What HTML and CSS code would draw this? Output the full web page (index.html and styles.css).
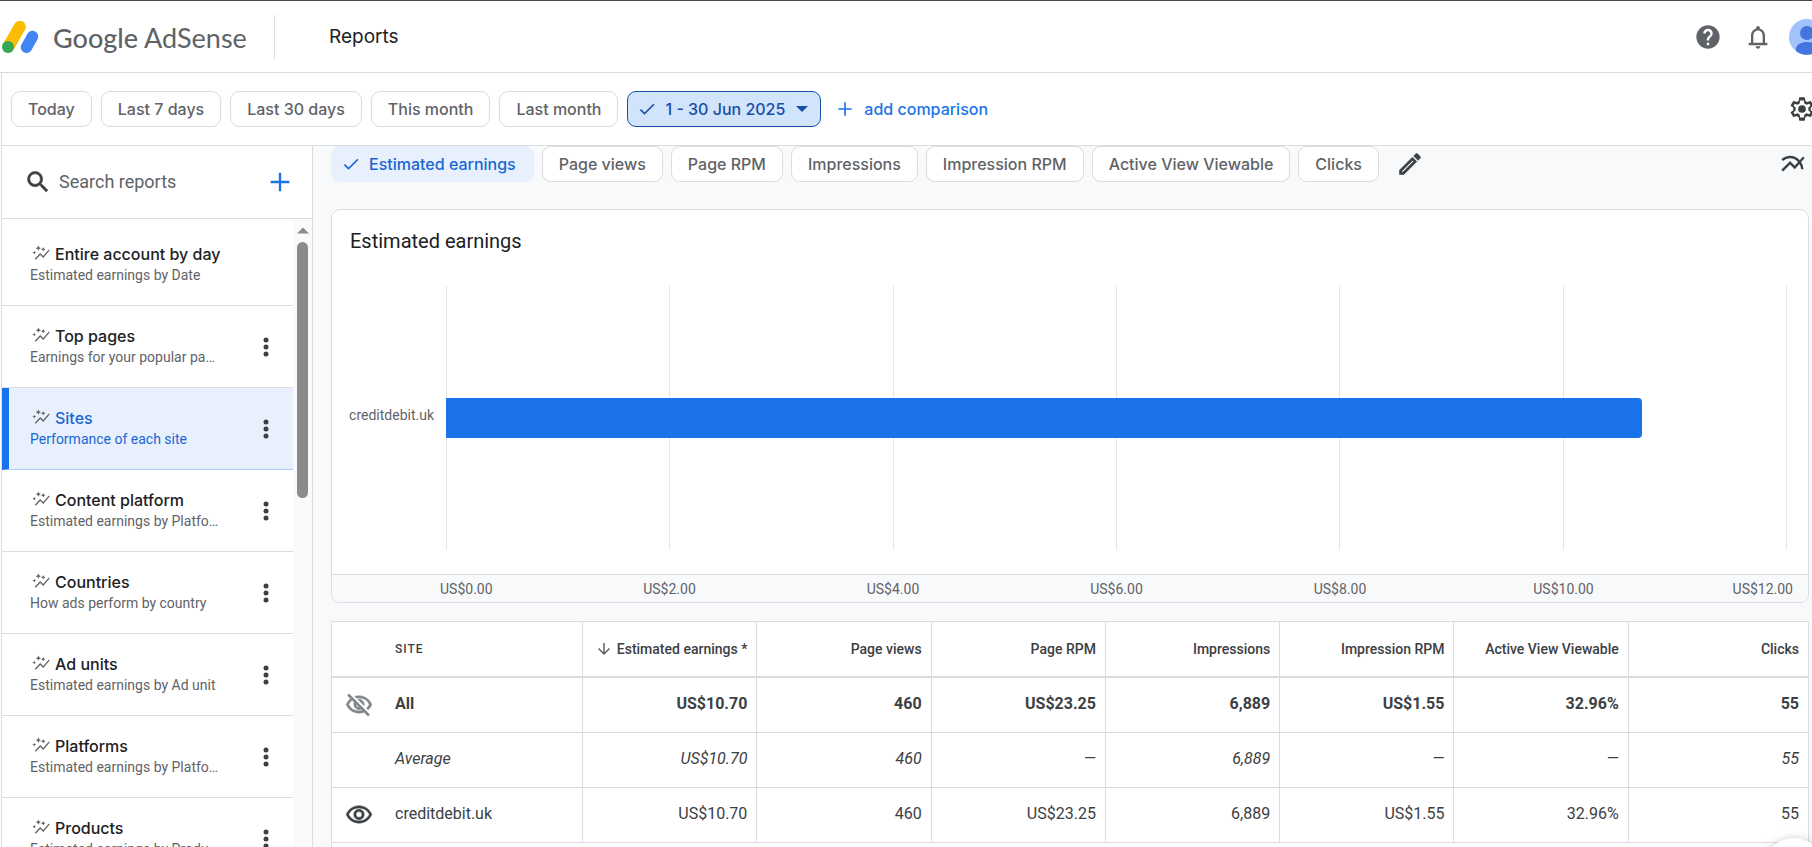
FILE: index.html
```html
<!DOCTYPE html>
<html lang="en">
<head>
    <meta charset="UTF-8">
    <meta name="viewport" content="width=device-width, initial-scale=1.0">
    <title>Reports - Google AdSense</title>
    <link rel="stylesheet" href="styles.css">
</head>
<body>

<!-- Shared icon shapes -->
<svg class="sprite" aria-hidden="true">
    <symbol id="i-check" viewBox="0 0 24 24"><path d="M9 16.17L4.83 12l-1.42 1.41L9 19 21 7l-1.41-1.41z"/></symbol>
    <symbol id="i-plus" viewBox="0 0 24 24"><path d="M20 13h-7v7h-2v-7H4v-2h7V4h2v7h7z"/></symbol>
    <symbol id="i-more" viewBox="0 0 24 24"><circle cx="12" cy="5" r="2.5"/><circle cx="12" cy="12" r="2.5"/><circle cx="12" cy="19" r="2.5"/></symbol>
    <symbol id="i-graph" viewBox="0 0 24 24"><path d="M14.06 7.94L12 7l2.06-.94L15 4l.94 2.06L18 7l-2.06.94L15 10zM3 14l.7-1.800L5.500 11.500l-1.800-.7L3 9l-.7 1.800L.5 11.500l1.800.7zM8.5 9l1.09-2.41L12 5.5 9.59 4.41 8.5 2 7.41 4.41 5 5.5l2.41 1.09zM5 21l6-6.500 4 4L23.500 8.500l-1.100-1.100-7.500 8.600-4-4L3.800 19.800z"/></symbol>
</svg>

<header class="header">
    <a class="brand" href="#">
        <svg class="brand-logo" viewBox="0 0 36 32" fill="none" stroke-linecap="round" aria-hidden="true">
            <path d="M17.800 5.800L6.500 25.500" stroke="#fbbc04" stroke-width="12"/>
            <path d="M30.500 15.500L24.500 26.200" stroke="#4285f4" stroke-width="11.500"/>
            <circle cx="6" cy="26" r="6" fill="#34a853"/>
        </svg>
        <span class="brand-name"><span class="brand-google">Google</span> AdSense</span>
    </a>
    <h1 class="page-title">Reports</h1>
    <div class="header-actions">
        <button class="icon-button muted" aria-label="Help">
            <svg class="icon" viewBox="0 0 24 24"><path d="M12 2C6.480 2 2 6.480 2 12s4.480 10 10 10 10-4.480 10-10S17.520 2 12 2zm1 17h-2v-2h2v2zm2.070-7.750l-.9.920C13.450 12.900 13 13.500 13 15h-2v-.5c0-1.100.45-2.100 1.170-2.830l1.240-1.260c.37-.36.590-.86.590-1.410 0-1.100-.9-2-2-2s-2 .9-2 2H8c0-2.210 1.790-4 4-4s4 1.790 4 4c0 .88-.36 1.680-.93 2.250z"/></svg>
        </button>
        <button class="icon-button muted" aria-label="Notifications">
            <svg class="icon" viewBox="0 0 24 24"><path d="M12 22c1.100 0 2-.9 2-2h-4c0 1.100.9 2 2 2zm6-5v-6c0-3.070-1.630-5.640-4.500-6.320V4c0-.83-.67-1.500-1.500-1.500s-1.500.67-1.500 1.500v.68C7.640 5.360 6 7.920 6 11v6H4v2h16v-2h-2zm-2 0H8v-6c0-2.480 1.510-4.500 4-4.500s4 2.020 4 4.500v6z"/></svg>
        </button>
        <button class="avatar" aria-label="Account">
            <svg viewBox="0 0 36 36"><circle cx="18" cy="18" r="18" fill="#a1c2fa"/><circle cx="18" cy="14" r="7" fill="#4374e0"/><path d="M7 32v-2c0-5 6-7 11-7s11 2 11 7v2a18 18 0 0 1-22 0z" fill="#4374e0"/></svg>
        </button>
    </div>
</header>

<div class="app">
    <div class="date-bar">
        <button class="chip">Today</button>
        <button class="chip">Last 7 days</button>
        <button class="chip">Last 30 days</button>
        <button class="chip">This month</button>
        <button class="chip">Last month</button>
        <button class="chip chip-range">
            <svg class="icon-small"><use href="#i-check"/></svg>
            1 - 30 Jun 2025
            <svg class="caret" viewBox="0 0 12 6"><path d="M0 0h12L6 6z"/></svg>
        </button>
        <button class="add-comparison"><svg class="icon-small"><use href="#i-plus"/></svg>add comparison</button>
        <button class="icon-button settings" aria-label="Settings">
            <svg class="icon" viewBox="0 0 24 24"><path d="M19.430 12.980c.04-.32.07-.64.07-.98s-.03-.66-.07-.98l2.110-1.650c.19-.15.240-.42.120-.64l-2-3.460c-.12-.22-.39-.3-.61-.22l-2.490 1c-.52-.4-1.080-.73-1.690-.98l-.38-2.650C14.460 2.180 14.250 2 14 2h-4c-.25 0-.46.180-.49.420l-.38 2.650c-.61.250-1.170.590-1.690.980l-2.490-1c-.23-.09-.49 0-.61.220l-2 3.460c-.13.220-.07.490.120.640l2.110 1.650c-.04.320-.07.650-.07.980s.03.660.070.980l-2.110 1.650c-.19.150-.24.420-.12.640l2 3.460c.12.220.390.300.610.220l2.490-1c.520.400 1.080.730 1.690.980l.380 2.650c.03.240.240.420.490.420h4c.25 0 .46-.18.490-.42l.380-2.650c.61-.25 1.170-.59 1.690-.98l2.490 1c.23.090.490 0 .61-.22l2-3.460c.12-.22.070-.49-.12-.64zM17.500 12l-.1 1.300 1.900 1.500-1 1.700-2.300-.9-2 1.200-.4 2.400h-3.200l-.4-2.400-2-1.200-2.300.9-1-1.700 1.900-1.500L6.500 12l.1-1.300-1.900-1.500 1-1.700 2.300.9 2-1.200.4-2.400h3.200l.4 2.400 2 1.200 2.300-.9 1 1.700-1.900 1.500z" fill-rule="evenodd"/><circle cx="12" cy="12" r="3.300"/></svg>
        </button>
    </div>

    <div class="content">
        <aside class="sidebar">
            <div class="search">
                <label for="search" aria-label="Search reports">
                    <svg class="icon" viewBox="0 0 24 24"><path d="M15.500 14h-.79l-.28-.27A6.470 6.470 0 0 0 16 9.500 6.500 6.500 0 1 0 9.500 16c1.610 0 3.090-.59 4.230-1.570l.27.280v.79l5 4.990L20.490 19l-4.990-5zm-6 0C7.010 14 5 11.990 5 9.500S7.010 5 9.500 5 14 7.010 14 9.500 11.990 14 9.500 14z" stroke="currentColor" stroke-width=".5"/></svg>
                </label>
                <input type="text" id="search" placeholder="Search reports">
                <button class="icon-button add-report" aria-label="New report"><svg class="icon"><use href="#i-plus"/></svg></button>
            </div>
            <div class="reports">
                <ul class="report-list" id="reportList"></ul>
                <div class="scrollbar" aria-hidden="true">
                    <svg class="scroll-arrow" viewBox="0 0 12 6"><path d="M0 6h12L6 0z"/></svg>
                    <div class="scroll-thumb"></div>
                </div>
            </div>
        </aside>

        <main class="main">
            <div class="metrics">
                <button class="chip chip-selected"><svg class="icon-small"><use href="#i-check"/></svg>Estimated earnings</button>
                <button class="chip">Page views</button>
                <button class="chip">Page RPM</button>
                <button class="chip">Impressions</button>
                <button class="chip">Impression RPM</button>
                <button class="chip">Active View Viewable</button>
                <button class="chip">Clicks</button>
                <button class="icon-button edit" aria-label="Edit metrics">
                    <svg class="icon" viewBox="0 0 24 24"><path d="M14.060 9.020l.92.920L5.920 19H5v-.92l9.060-9.060M17.660 3c-.25 0-.51.100-.7.290l-1.830 1.830 3.750 3.750 1.830-1.830c.39-.39.390-1.020 0-1.410l-2.340-2.340c-.2-.2-.45-.29-.71-.29zm-3.600 3.190L3 17.250V21h3.750L17.810 9.940l-3.750-3.750z" stroke="currentColor" stroke-width=".5"/></svg>
                </button>
                <button class="icon-button chart-type" aria-label="Chart type">
                    <svg class="icon" viewBox="0 0 24 24"><path d="M22 6.920l-1.410-1.410-2.850 3.210C15.680 6.400 12.830 5 9.610 5 6.720 5 4.070 6.160 2 8l1.420 1.420C5.120 7.930 7.270 7 9.610 7c2.740 0 5.090 1.260 6.770 3.240l-2.880 3.240-4-4L2 16.990l1.500 1.500 6-6.010 4 4 4.050-4.550c.75 1.350 1.250 2.900 1.440 4.550H21c-.22-2.300-.95-4.390-2.040-6.140L22 6.920z"/></svg>
                </button>
            </div>

            <section class="card">
                <h2 class="card-title">Estimated earnings</h2>
                <div class="chart">
                    <div class="chart-label">creditdebit.uk</div>
                    <div class="plot">
                        <div class="gridlines"><i></i><i></i><i></i><i></i><i></i><i></i></div>
                        <div class="bar" style="width: 89.17%"></div>
                    </div>
                </div>
                <div class="axis">
                    <span>US$0.00</span>
                    <span>US$2.00</span>
                    <span>US$4.00</span>
                    <span>US$6.00</span>
                    <span>US$8.00</span>
                    <span>US$10.00</span>
                    <span>US$12.00</span>
                </div>
            </section>

            <table class="report-table">
                <colgroup>
                    <col class="col-site"><col class="col-metric"><col class="col-metric"><col class="col-metric"><col class="col-metric"><col class="col-metric"><col class="col-metric"><col>
                </colgroup>
                <thead>
                    <tr>
                        <th class="site-heading">SITE</th>
                        <th><span class="sorted"><svg class="sort-arrow" viewBox="0 0 24 24"><path d="M20 12l-1.410-1.410L13 16.170V4h-2v12.170l-5.580-5.590L4 12l8 8z"/></svg>Estimated earnings *</span></th>
                        <th>Page views</th>
                        <th>Page RPM</th>
                        <th>Impressions</th>
                        <th>Impression RPM</th>
                        <th>Active View Viewable</th>
                        <th>Clicks</th>
                    </tr>
                </thead>
                <tbody>
                    <tr class="row-all">
                        <td>
                            <div class="site">
                                <button class="icon-button hidden-toggle" aria-label="Show in chart">
                                    <svg class="icon" viewBox="0 0 24 24"><path d="M12 6a9.770 9.770 0 0 1 8.820 5.500 9.650 9.650 0 0 1-2.410 3.120l1.410 1.410c1.390-1.230 2.490-2.770 3.180-4.530C21.270 7.110 17 4 12 4c-1.270 0-2.490.2-3.640.57l1.650 1.650C10.660 6.090 11.320 6 12 6zm-1.070 1.140L13 9.210c.57.250 1.030.710 1.280 1.280l2.070 2.070c.08-.34.140-.7.140-1.070C16.500 9.010 14.480 7 12 7c-.37 0-.72.050-1.070.14zM2.010 3.870l2.680 2.680A11.740 11.740 0 0 0 1 11.500C2.730 15.890 7 19 12 19c1.520 0 2.980-.29 4.320-.82l3.420 3.420 1.410-1.410L3.420 2.450 2.010 3.870zm7.500 7.500l2.610 2.610c-.04.010-.08.020-.12.020a2.500 2.500 0 0 1-2.500-2.500c0-.05.010-.08.010-.13zm-3.400-3.400l1.750 1.750a4.600 4.600 0 0 0-.36 1.780 4.507 4.507 0 0 0 6.270 4.140l.98.980c-.88.240-1.800.38-2.750.38a9.770 9.770 0 0 1-8.820-5.500c.7-1.430 1.720-2.610 2.930-3.530z" stroke="currentColor" stroke-width=".4"/></svg>
                                </button>
                                All
                            </div>
                        </td>
                        <td>US$10.70</td>
                        <td>460</td>
                        <td>US$23.25</td>
                        <td>6,889</td>
                        <td>US$1.55</td>
                        <td>32.96%</td>
                        <td>55</td>
                    </tr>
                    <tr class="row-average">
                        <td><div class="site site-plain">Average</div></td>
                        <td>US$10.70</td>
                        <td>460</td>
                        <td>—</td>
                        <td>6,889</td>
                        <td>—</td>
                        <td>—</td>
                        <td>55</td>
                    </tr>
                    <tr>
                        <td>
                            <div class="site">
                                <button class="icon-button" aria-label="Hide from chart">
                                    <svg class="icon" viewBox="0 0 24 24"><path d="M12 6a9.770 9.770 0 0 1 8.820 5.500C19.170 14.870 15.790 17 12 17s-7.170-2.130-8.820-5.500A9.770 9.770 0 0 1 12 6m0-2C7 4 2.730 7.110 1 11.500 2.730 15.890 7 19 12 19s9.270-3.110 11-7.500C21.270 7.110 17 4 12 4zm0 5a2.500 2.500 0 0 1 0 5 2.500 2.500 0 0 1 0-5m0-2c-2.480 0-4.500 2.020-4.500 4.500S9.520 16 12 16s4.500-2.020 4.500-4.500S14.480 7 12 7z" stroke="currentColor" stroke-width=".4"/></svg>
                                </button>
                                creditdebit.uk
                            </div>
                        </td>
                        <td>US$10.70</td>
                        <td>460</td>
                        <td>US$23.25</td>
                        <td>6,889</td>
                        <td>US$1.55</td>
                        <td>32.96%</td>
                        <td>55</td>
                    </tr>
                </tbody>
            </table>
            <div class="table-footer"></div>
        </main>
    </div>
</div>

<button class="feedback" aria-label="Send feedback"></button>

<script>
    const reports = [
        { name: 'Entire account by day', description: 'Estimated earnings by Date', fixed: true },
        { name: 'Top pages', description: 'Earnings for your popular pages' },
        { name: 'Sites', description: 'Performance of each site', selected: true },
        { name: 'Content platform', description: 'Estimated earnings by Platform' },
        { name: 'Countries', description: 'How ads perform by country' },
        { name: 'Ad units', description: 'Estimated earnings by Ad unit' },
        { name: 'Platforms', description: 'Estimated earnings by Platform' },
        { name: 'Products', description: 'Estimated earnings by Product' }
    ];

    const reportList = document.getElementById('reportList');

    reports.forEach((report) => {
        const item = document.createElement('li');
        item.className = report.selected ? 'report selected' : 'report';
        item.innerHTML = `
            <a class="report-link" href="#">
                <span class="report-name"><svg class="report-icon"><use href="#i-graph"/></svg>${report.name}</span>
                <span class="report-description">${report.description}</span>
            </a>`;
        // The default report has no menu
        if (!report.fixed) {
            item.innerHTML += `<button class="icon-button" aria-label="Options for ${report.name}"><svg class="more"><use href="#i-more"/></svg></button>`;
        }
        reportList.appendChild(item);
    });
</script>

</body>
</html>
```
FILE: styles.css
```css
* {
    box-sizing: border-box;
}
html, body {
    height: 100%;
}
body {
    margin: 0;
    display: flex;
    flex-direction: column;
    overflow: hidden;
    font-family: Roboto, "Liberation Sans", Arial, sans-serif;
    font-size: 14px;
    line-height: 20px;
    color: #3c4043;
    background-color: #fff;
}
button {
    padding: 0;
    border: none;
    background: none;
    color: inherit;
    cursor: pointer;
}
a {
    color: inherit;
    text-decoration: none;
}
svg {
    display: block;
    flex: none;
    fill: currentColor;
}
.sprite {
    position: absolute;
    width: 0;
    height: 0;
}
.icon {
    width: 28px;
    height: 28px;
}
.icon-small {
    width: 20px;
    height: 20px;
}
.icon-button {
    flex: none;
}
.muted {
    color: #5f6368;
}

/* Header */
.header {
    flex: none;
    display: flex;
    align-items: center;
    height: 73px;
    border-top: 1px solid #4a4548;
    border-bottom: 1px solid #dadce0;
    padding-left: 2px;
}
.brand {
    display: flex;
    align-items: center;
    gap: 15px;
    width: 273px;
    height: 44px;
    border-right: 1px solid #dadce0;
}
.brand-logo {
    width: 36px;
    height: 32px;
}
.brand-name {
    font: 27px/32px Lato, sans-serif;
    color: #5f6368;
    padding-top: 2px;
}
.brand-google {
    font-weight: 500;
}
.page-title {
    margin: 0;
    padding-left: 54px;
    font: 400 19px/28px Inter, sans-serif;
    color: #202124;
}
.header-actions {
    display: flex;
    align-items: center;
    gap: 22px;
    margin-left: auto;
    margin-right: -13px;
}
.avatar {
    width: 36px;
    height: 36px;
    margin-left: -5px;
}

/* Date range */
.app {
    flex: 1;
    min-height: 0;
    display: flex;
    flex-direction: column;
    margin-left: 1px;
    border-left: 1px solid #dadce0;
}
.date-bar {
    flex: none;
    display: flex;
    align-items: center;
    gap: 9px;
    height: 73px;
    padding-left: 9px;
    border-bottom: 1px solid #dadce0;
}
.chip {
    display: flex;
    align-items: center;
    flex: none;
    height: 36px;
    padding: 0 16px;
    border: 1px solid #dadce0;
    border-radius: 9px;
    background-color: #fff;
    font: 500 16px/20px Inter, sans-serif;
    color: #5f6368;
}
.chip-range {
    gap: 8px;
    padding: 0 12px 0 9px;
    border-color: #174ea6;
    background-color: #d2e3fc;
    color: #174ea6;
}
.caret {
    width: 12px;
    height: 6px;
    margin-left: 3px;
}
.add-comparison {
    display: flex;
    align-items: center;
    gap: 9px;
    margin-left: 5px;
    font: 500 16px/20px Inter, sans-serif;
    color: #1a73e8;
}
.settings {
    margin-left: auto;
    margin-right: -4px;
}

/* Sidebar */
.content {
    flex: 1;
    min-height: 0;
    display: flex;
}
.sidebar {
    flex: none;
    display: flex;
    flex-direction: column;
    width: 311px;
    border-right: 1px solid #dadce0;
}
.search {
    flex: none;
    display: flex;
    align-items: center;
    height: 73px;
    padding: 0 18px 0 22px;
    border-bottom: 1px solid #dadce0;
}
.search input {
    flex: 1;
    min-width: 0;
    border: none;
    outline: none;
    padding: 0 0 0 7px;
    font: 18px/24px Roboto, sans-serif;
}
.search input::placeholder {
    color: #5f6368;
}
.add-report {
    color: #1a73e8;
}
.reports {
    flex: 1;
    min-height: 0;
    display: flex;
}
.report-list {
    flex: 1;
    min-width: 0;
    margin: 0;
    padding: 5px 0 0;
    list-style: none;
    overflow: hidden;
}
.report {
    display: flex;
    align-items: center;
    height: 82px;
    padding: 0 15px 0 28px;
    border-bottom: 1px solid #dadce0;
}
.report-link {
    flex: 1;
    min-width: 0;
    padding-right: 34px;
}
.report-name {
    display: flex;
    align-items: center;
    gap: 5px;
    padding-left: 2px;
    font: 500 16px/20px Inter, sans-serif;
    color: #202124;
}
.report-description {
    display: block;
    overflow: hidden;
    white-space: nowrap;
    text-overflow: ellipsis;
    line-height: 22px;
    color: #5f6368;
}
.report-icon {
    width: 18px;
    height: 18px;
    margin-bottom: 2px;
    color: #5f6368;
}
.more {
    width: 24px;
    height: 24px;
}
.selected {
    padding-left: 21px;
    border-left: 7px solid #1a73e8;
    border-bottom-color: #aecbfa;
    background-color: #e8f0fe;
}
.selected .report-name, .selected .report-description {
    color: #1967d2;
}
.scrollbar {
    flex: none;
    width: 19px;
    padding: 8px 4px;
    background-color: #fafafa;
    color: #8b8b8b;
}
.scroll-arrow {
    width: 12px;
    height: 7px;
}
.scroll-thumb {
    width: 11px;
    height: 256px;
    margin-top: 8px;
    border-radius: 6px;
    background-color: #8b8b8b;
}

/* Report */
.main {
    flex: 1;
    min-width: 0;
    display: flex;
    flex-direction: column;
    padding: 0 3px 0 18px;
    background-color: #f8f9fb;
}
.metrics {
    flex: none;
    display: flex;
    align-items: center;
    gap: 8px;
    margin-bottom: 27px;
}
.chip-selected {
    gap: 8px;
    padding: 0 17px 0 9px;
    border-color: #e8f0fe;
    background-color: #e8f0fe;
    color: #1967d2;
}
.edit {
    margin-left: 9px;
}
.chart-type {
    margin-left: auto;
    margin-right: 2px;
}
.card {
    flex: none;
    overflow: hidden;
    border: 1px solid #dadce0;
    border-radius: 9px;
    background-color: #fff;
}
.card-title {
    margin: 0;
    padding: 17px 18px 31px;
    font-size: 20px;
    font-weight: 400;
    line-height: 28px;
    color: #202124;
}
.chart {
    display: grid;
    grid-template-columns: 114px 1fr;
    align-items: center;
    height: 264px;
    margin-bottom: 24px;
    padding-right: 21px;
}
.chart-label {
    padding: 0 12px 6px 0;
    text-align: right;
    color: #5f6368;
}
/* Bars share the plot's only grid cell with the gridlines */
.plot {
    display: grid;
    align-items: center;
    height: 100%;
}
.gridlines {
    grid-area: 1 / 1;
    display: flex;
    height: 100%;
    border-right: 1px solid #e4e5e7;
}
.gridlines i {
    flex: 1;
    border-left: 1px solid #e4e5e7;
}
.bar {
    grid-area: 1 / 1;
    height: 40px;
    border-radius: 0 4px 4px 0;
    background-color: #1a73e8;
}
.axis {
    display: grid;
    grid-template-columns: 1fr repeat(5, 2fr) 1fr;
    padding: 4px 21px 3px 114px;
    border-top: 1px solid #dadce0;
    background-color: #f8f9fb;
    text-align: center;
    color: #5f6368;
}
.axis span:first-child {
    margin-left: -6px;
    text-align: left;
}
.axis span:last-child {
    margin-right: -6px;
    text-align: right;
}

/* Table */
.report-table {
    flex: none;
    width: 100%;
    margin-top: 18px;
    table-layout: fixed;
    border-collapse: collapse;
    background-color: #fff;
}
.col-site {
    width: 17%;
}
.col-metric {
    width: 11.8%;
}
.report-table th, .report-table td {
    height: 55px;
    padding: 0 9px;
    border: 1px solid #dadce0;
    text-align: right;
    white-space: nowrap;
}
.report-table th {
    border-bottom-width: 2px;
    font-weight: 500;
}
.report-table td {
    padding-bottom: 2px;
    font-size: 16px;
}
.report-table .site-heading {
    padding-left: 63px;
    text-align: left;
    font-size: 12px;
    letter-spacing: 1px;
}
.sorted {
    display: flex;
    align-items: center;
    justify-content: flex-end;
    gap: 4px;
}
.sort-arrow {
    width: 18px;
    height: 18px;
    color: #5f6368;
}
.site {
    display: flex;
    align-items: center;
    gap: 22px;
    padding-left: 4px;
}
.site .icon {
    margin-top: 2px;
}
.site-plain {
    padding-left: 54px;
}
.hidden-toggle {
    color: #80868b;
}
.report-table .row-all td {
    height: 56px;
    font-weight: 700;
}
.row-average {
    font-style: italic;
}
.table-footer {
    flex: 1;
    border: 1px solid #dadce0;
    border-width: 0 1px;
    background-color: #fff;
}

/* Floating button, partly below the fold */
.feedback {
    position: fixed;
    right: -14px;
    bottom: -55px;
    width: 64px;
    height: 64px;
    border-radius: 50%;
    background-color: #fff;
    box-shadow: 0 1px 8px rgba(60, 64, 67, 0.3);
}
```
